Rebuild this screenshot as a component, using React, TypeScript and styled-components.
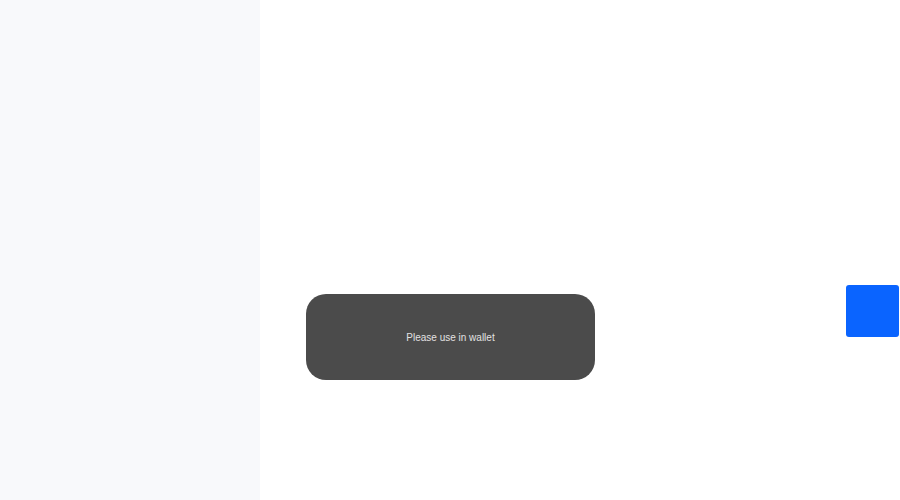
import React from "react";
import styled, { createGlobalStyle } from "styled-components";

const GlobalStyle = createGlobalStyle`
  html, body { margin: 0; padding: 0; height: 100%; }
  body { font-family: "Liberation Sans", Arial, sans-serif; background: #ffffff; }
  #root { height: 100%; }
`;

const Page = styled.div`
  display: flex;
  width: 100%;
  height: 100vh;
`;

const Sidebar = styled.aside`
  width: 260px;
  flex-shrink: 0;
  background: #f8f9fb;
`;

const Main = styled.main`
  flex: 1;
  background: #ffffff;
`;

const Toast = styled.div`
  position: fixed;
  left: 306px;
  top: 294px;
  width: 289px;
  height: 86px;
  border-radius: 20px;
  background: #4b4b4b;
  color: #e2e2e2;
  font-family: "Liberation Sans", Arial, sans-serif;
  font-size: 10px;
  display: flex;
  align-items: center;
  justify-content: center;
`;

const FloatButton = styled.button`
  position: fixed;
  right: 1px;
  top: 285px;
  width: 53px;
  height: 52px;
  border: none;
  border-radius: 3px;
  background: #0a64ff;
  padding: 0;
  cursor: pointer;
`;

export default function App() {
  return (
    <>
      <GlobalStyle />
      <Page>
        <Sidebar />
        <Main />
      </Page>
      <Toast>Please use in wallet</Toast>
      <FloatButton aria-label="action" />
    </>
  );
}
